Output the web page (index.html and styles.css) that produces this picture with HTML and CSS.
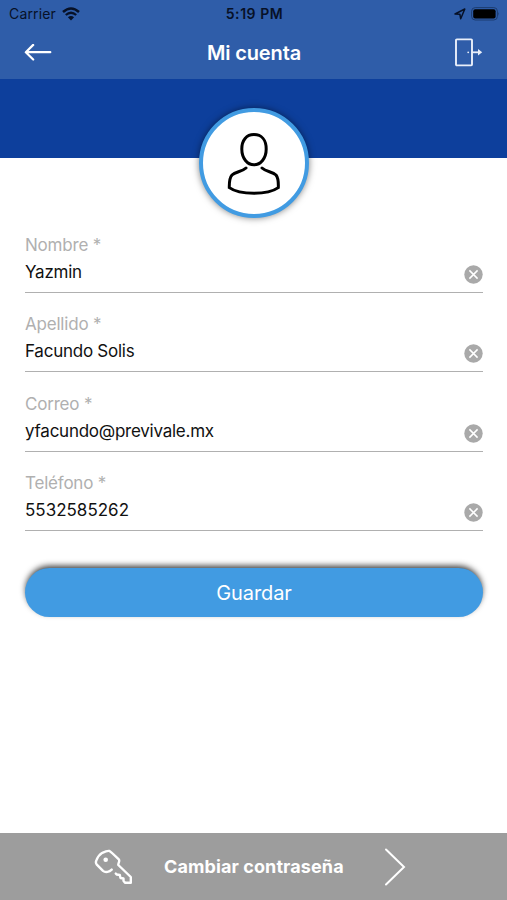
FILE: index.html
```html
<!DOCTYPE html>
<html lang="es">
    <head>
        <meta charset="utf-8">
        <title>Mi cuenta</title>
        <link rel="stylesheet" href="styles.css">
    </head>
    <body>
        <div class="container">
            <div class="header">
                <div class="statusBar">
                    <div class="carrier">
                        <span>Carrier</span>
                        <svg width="18" height="14" viewBox="0 0 18 14">
                            <path d="M1 5 Q9 -2 17 5" fill="none" stroke="#071127" stroke-width="2.5"/>
                            <path d="M3.8 8 Q9 3.4 14.2 8" fill="none" stroke="#071127" stroke-width="2.3"/>
                            <path d="M9 13.4 L5.9 10.3 Q9 7.7 12.1 10.3 Z" fill="#071127"/>
                        </svg>
                    </div>
                    <div class="clock">5:19 PM</div>
                    <div class="statusIcons">
                        <svg width="12" height="12" viewBox="0 0 12 12">
                            <path d="M1 6 L10.8 1 L6.7 10.8 L5.9 6.3 Z" fill="none" stroke="#071127" stroke-width="1.5" stroke-linejoin="round"/>
                        </svg>
                        <svg width="29" height="14" viewBox="0 0 29 14">
                            <rect x="0.6" y="0.6" width="25.8" height="12.4" rx="3.6" fill="none" stroke="#1c3c70" stroke-width="1"/>
                            <rect x="2.2" y="2.2" width="22.4" height="9.2" rx="2" fill="#000"/>
                            <path d="M27.3 5 Q28.8 6.8 27.3 8.8 Z" fill="#1c3c70"/>
                        </svg>
                    </div>
                </div>
                <div class="navBar">
                    <svg class="back" width="28" height="18" viewBox="0 0 28 18">
                        <path d="M26.3 8.2 H2 M9.2 0.9 L1.8 8.2 L9.2 15.5" fill="none" stroke="#fff" stroke-width="2.2" stroke-linecap="round" stroke-linejoin="round"/>
                    </svg>
                    <div class="title">Mi cuenta</div>
                    <svg class="exit" width="30" height="30" viewBox="0 0 30 30">
                        <rect x="2" y="1.4" width="16" height="26" rx="0.8" fill="none" stroke="#e9effa" stroke-width="1.9"/>
                        <circle cx="14.2" cy="14.3" r="0.9" fill="#e9effa"/>
                        <path d="M18 14.3 H25" stroke="#e9effa" stroke-width="1.8"/>
                        <path d="M24 11 L28.2 14.3 L24 17.6 Z" fill="#e9effa"/>
                    </svg>
                </div>
            </div>
            <div class="banner">
                <div class="avatar">
                    <svg width="56" height="64" viewBox="0 0 56 64">
                        <g fill="none" stroke="#000" stroke-width="3" stroke-linecap="round">
                            <path d="M28 2.6 C35.5 2.6 40.2 8 40.2 17 C40.2 26.5 34.5 32.8 28 32.8 C21.5 32.8 15.8 26.5 15.8 17 C15.8 8 20.5 2.6 28 2.6 Z"/>
                            <path d="M20 36 C16 39.8 9.5 39.7 6 43 C3.3 46 3.2 51 3.3 55.6 C9 59.7 18 61.3 28 61.3 C38 61.3 46.5 59.7 52.3 55.6 C52.5 51 52.3 46 50 43 C46.5 39.7 40 39.8 36 36"/>
                        </g>
                    </svg>
                </div>
            </div>
            <div class="form">
                <div class="field">
                    <div class="label">Nombre *</div>
                    <div class="value">Yazmin</div>
                    <svg class="clear" width="19" height="19" viewBox="0 0 19 19">
                        <circle cx="9.5" cy="9.5" r="9.2" fill="#a9a9a9"/>
                        <path d="M5.4 5.4 L13.6 13.6 M13.6 5.4 L5.4 13.6" stroke="#fff" stroke-width="1.5"/>
                    </svg>
                </div>
                <div class="field">
                    <div class="label">Apellido *</div>
                    <div class="value">Facundo Solis</div>
                    <svg class="clear" width="19" height="19" viewBox="0 0 19 19">
                        <circle cx="9.5" cy="9.5" r="9.2" fill="#a9a9a9"/>
                        <path d="M5.4 5.4 L13.6 13.6 M13.6 5.4 L5.4 13.6" stroke="#fff" stroke-width="1.5"/>
                    </svg>
                </div>
                <div class="field">
                    <div class="label">Correo *</div>
                    <div class="value">yfacundo@previvale.mx</div>
                    <svg class="clear" width="19" height="19" viewBox="0 0 19 19">
                        <circle cx="9.5" cy="9.5" r="9.2" fill="#a9a9a9"/>
                        <path d="M5.4 5.4 L13.6 13.6 M13.6 5.4 L5.4 13.6" stroke="#fff" stroke-width="1.5"/>
                    </svg>
                </div>
                <div class="field">
                    <div class="label">Teléfono *</div>
                    <div class="value phone">5532585262</div>
                    <svg class="clear" width="19" height="19" viewBox="0 0 19 19">
                        <circle cx="9.5" cy="9.5" r="9.2" fill="#a9a9a9"/>
                        <path d="M5.4 5.4 L13.6 13.6 M13.6 5.4 L5.4 13.6" stroke="#fff" stroke-width="1.5"/>
                    </svg>
                </div>
                <div class="button">Guardar</div>
            </div>
            <div class="footer">
                <svg width="40" height="36" viewBox="0 0 40 36">
                    <g fill="none" stroke="#fff" stroke-width="2.4" stroke-linejoin="round" stroke-linecap="round">
                        <path d="M17.7 20.6 C15.5 22.8 11.5 24 9 21.8 L2.8 15.6 C1.5 14.2 1.8 12.5 2.5 11 C3.8 8 5.5 5.5 8 4 C10.5 2.8 13 1.5 15.5 2 C17 2.8 23 8.7 25 10.6 C26 12 24 14.3 24.3 16 L36.8 28 V33.8 H31 L29.5 31.8 V29.5 L26.5 29 L25.8 26 L22.8 25.5 L21.8 24.6"/>
                    </g>
                    <circle cx="11.7" cy="10.8" r="2.3" fill="#fff"/>
                </svg>
                <div class="footerText">Cambiar contraseña</div>
                <svg width="22" height="38" viewBox="0 0 22 38">
                    <path d="M2 1.5 L20 19 L2 36.5" fill="none" stroke="#fff" stroke-width="2" stroke-linecap="round"/>
                </svg>
            </div>
        </div>
    </body>
</html>
```
FILE: styles.css
```css
*{
    padding: 0;
    margin: 0;
    box-sizing: border-box;
}
body {
    background-color: #fff;
    font-family: Inter, "Liberation Sans", sans-serif;
}
svg{
    display: block;
    flex: none;
}
.container{
    height: 900px;
    display: flex;
    flex-direction: column;
    overflow: hidden;
}
.header{
    height: 79px;
    background-color: #2f5da9;
}
.statusBar{
    height: 27px;
    padding: 0 7px 0 9px;
    display: grid;
    grid-template-columns: 1fr auto 1fr;
    align-items: center;
    color: #071127;
    font-size: 14px;
}
.carrier{
    display: flex;
    align-items: center;
    gap: 6px;
    letter-spacing: 0.15px;
}
.clock{
    font-weight: 600;
    letter-spacing: 0.55px;
}
.statusIcons{
    display: flex;
    justify-content: flex-end;
    align-items: center;
    gap: 5px;
}
.navBar{
    height: 51px;
    padding: 0 23px 0 24px;
    display: flex;
    justify-content: space-between;
    align-items: center;
    color: #fff;
}
.title{
    padding-left: 2px;
    font-size: 20px;
    font-weight: 600;
    letter-spacing: -0.15px;
}
.banner{
    height: 79px;
    padding-top: 29px;
    background-color: #0d3f9c;
}
.avatar{
    width: 110px;
    height: 110px;
    margin: auto;
    padding-top: 1px;
    border: 4px solid #419be2;
    border-radius: 50%;
    background-color: #fff;
    box-shadow: 0 0 7px rgba(0,0,0,0.5);
    display: flex;
    justify-content: center;
    align-items: center;
}
.form{
    flex: 1;
    padding: 76px 24px 0 25px;
}
.field{
    height: 79.4px;
    position: relative;
    font-size: 17px;
}
.field:after{
    content: "";
    display: block;
    height: 1px;
    margin-top: 8px;
    background-color: #b0b0b0;
}
.label{
    height: 22px;
    line-height: 22px;
    letter-spacing: -0.2px;
    color: #b0b0b0;
}
.value{
    height: 28px;
    line-height: 32px;
    letter-spacing: -0.25px;
    color: #111;
}
.phone{
    letter-spacing: 0;
}
.clear{
    position: absolute;
    right: 0;
    top: 31px;
}
.button{
    height: 49px;
    line-height: 50px;
    margin-top: 16px;
    border-radius: 25px;
    background-color: #419be2;
    box-shadow: 0 -3px 6px -1px rgba(0,0,0,0.8);
    color: #fff;
    font-size: 20px;
    letter-spacing: -0.1px;
    text-align: center;
}
.footer{
    height: 67px;
    padding-left: 94px;
    background-color: #9d9d9d;
    color: #fff;
    display: flex;
    align-items: center;
}
.footerText{
    width: 181px;
    margin: 0 39px 0 30px;
    font-size: 18px;
    font-weight: 700;
    letter-spacing: 0.1px;
    white-space: nowrap;
}
```
